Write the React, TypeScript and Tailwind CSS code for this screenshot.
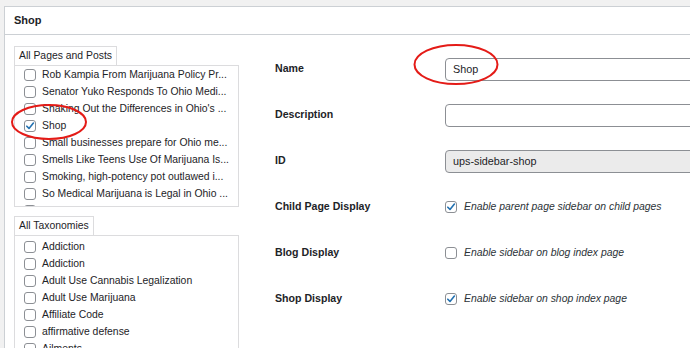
import React from 'react';

const pages = [
  { label: 'Rob Kampia From Marijuana Policy Pr...', checked: false },
  { label: 'Senator Yuko Responds To Ohio Medi...', checked: false },
  { label: "Shaking Out the Differences in Ohio's ...", checked: false },
  { label: 'Shop', checked: true },
  { label: 'Small businesses prepare for Ohio me...', checked: false },
  { label: 'Smells Like Teens Use Of Marijuana Is...', checked: false },
  { label: 'Smoking, high-potency pot outlawed i...', checked: false },
  { label: 'So Medical Marijuana is Legal in Ohio ...', checked: false },
  { label: 'Social Clubs', checked: false },
];

const taxonomies = [
  'Addiction',
  'Addiction',
  'Adult Use Cannabis Legalization',
  'Adult Use Marijuana',
  'Affiliate Code',
  'affirmative defense',
  'Ailments',
];

function Box({ checked }: { checked: boolean }) {
  return (
    <span className="flex h-[12px] w-[12px] shrink-0 items-center justify-center rounded-[3px] border border-[#8c8f94] bg-white">
      {checked && (
        <svg width="10" height="10" viewBox="0 0 10 10">
          <path d="M1.8 5.2 L4 7.4 L8.4 2" fill="none" stroke="#2271b1" strokeWidth="1.6" strokeLinecap="round" strokeLinejoin="round" />
        </svg>
      )}
    </span>
  );
}

function ListRow({ label, checked }: { label: string; checked: boolean }) {
  return (
    <div className="flex h-[17px] items-center gap-[6px] pl-[9px] whitespace-nowrap">
      <Box checked={checked} />
      <span className="text-[10.4px] text-[#1d2327]">{label}</span>
    </div>
  );
}

function Tab({ children }: { children: React.ReactNode }) {
  return (
    <div className="relative -mb-px flex h-[20px] w-fit items-center border border-[#dcdcde] bg-white px-[4px] text-[10.4px] text-[#1d2327]">
      {children}
    </div>
  );
}

function Field({ label, children }: { label: string; children: React.ReactNode }) {
  return (
    <div className="flex h-[46px] items-center">
      <div className="w-[170px] shrink-0 text-[10.6px] font-bold text-[#1d2327]">{label}</div>
      <div className="flex-1">{children}</div>
    </div>
  );
}

export default function App() {
  return (
    <div
      className="relative h-[348px] w-[690px] overflow-hidden bg-[#f1f1f1] pl-[4px] pt-[6px]"
      style={{ fontFamily: '"Liberation Sans", Arial, sans-serif' }}
    >
      <div className="h-[400px] w-[720px] border border-[#ccd0d4] bg-white">
        <div className="flex h-[28px] items-center border-b border-[#ccd0d4] px-[9px] text-[11px] font-bold text-[#1d2327]">
          Shop
        </div>
        <div className="flex">
          {/* left: page / taxonomy pickers */}
          <div className="w-[234px] shrink-0 pl-[9px] pt-[11px]">
            <Tab>All Pages and Posts</Tab>
            <div className="h-[142px] w-[225px] overflow-hidden border border-[#dcdcde] bg-white">
              {pages.map((p, i) => (
                <ListRow key={i} label={p.label} checked={p.checked} />
              ))}
            </div>
            <div className="mt-[9px]">
              <Tab>All Taxonomies</Tab>
              <div className="h-[140px] w-[225px] overflow-hidden border border-[#dcdcde] bg-white pt-[2px]">
                {taxonomies.map((t, i) => (
                  <ListRow key={i} label={t} checked={false} />
                ))}
              </div>
            </div>
          </div>

          {/* right: settings */}
          <div className="flex-1 pl-[36px] pt-[11px]">
            <Field label="Name">
              <div className="flex h-[23px] items-center rounded-[4px] border border-[#8c8f94] bg-white px-[7px] text-[10.8px] text-[#1d2327]">
                Shop
              </div>
            </Field>
            <Field label="Description">
              <div className="h-[23px] rounded-[4px] border border-[#8c8f94] bg-white" />
            </Field>
            <Field label="ID">
              <div className="flex h-[23px] items-center rounded-[4px] border border-[#8c8f94] bg-[#ebebeb] px-[7px] text-[10.8px] text-[#1d2327]">
                ups-sidebar-shop
              </div>
            </Field>
            <Field label="Child Page Display">
              <label className="flex items-center gap-[7px] text-[10.4px] italic text-[#2c3338]">
                <Box checked />
                Enable parent page sidebar on child pages
              </label>
            </Field>
            <Field label="Blog Display">
              <label className="flex items-center gap-[7px] text-[10.4px] italic text-[#2c3338]">
                <Box checked={false} />
                Enable sidebar on blog index page
              </label>
            </Field>
            <Field label="Shop Display">
              <label className="flex items-center gap-[7px] text-[10.4px] italic text-[#2c3338]">
                <Box checked />
                Enable sidebar on shop index page
              </label>
            </Field>
          </div>
        </div>
      </div>

      {/* red annotation circles */}
      <svg className="pointer-events-none absolute left-0 top-0" width="690" height="348">
        <ellipse cx="49" cy="122" rx="37" ry="17" fill="none" stroke="#e41b17" strokeWidth="2" />
        <ellipse cx="456" cy="64.5" rx="41.5" ry="19.5" fill="none" stroke="#e41b17" strokeWidth="2" />
      </svg>
    </div>
  );
}
